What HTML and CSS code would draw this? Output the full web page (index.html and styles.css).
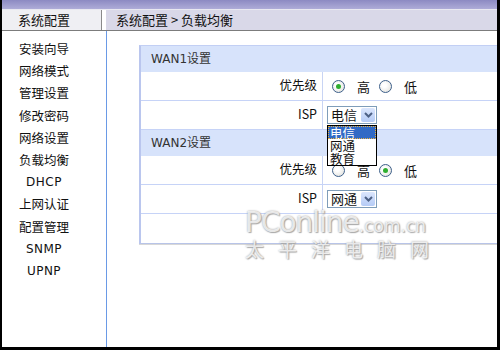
FILE: index.html
```html
<!DOCTYPE html>
<html lang="zh-CN">
    <head>
        <meta charset="UTF-8">
        <title>负载均衡</title>
        <link rel="stylesheet" href="styles.css">
    </head>
    <body>
        <div class="frame">
            <div class="topbar"></div>
            <div class="head">
                <div class="head-left">系统配置</div>
                <div class="head-right">系统配置 &gt; 负载均衡</div>
            </div>
            <div class="main">
                <ul class="menu">
                    <li>安装向导</li>
                    <li>网络模式</li>
                    <li>管理设置</li>
                    <li>修改密码</li>
                    <li>网络设置</li>
                    <li>负载均衡</li>
                    <li class="latin">DHCP</li>
                    <li>上网认证</li>
                    <li>配置管理</li>
                    <li class="latin">SNMP</li>
                    <li class="latin">UPNP</li>
                </ul>
                <div class="content">
                    <div class="panel">
                        <div class="sec-title">WAN1设置</div>
                        <div class="row">
                            <div class="label">优先级</div>
                            <div class="value">
                                <span class="radio on"></span><span class="opt">高</span>
                                <span class="radio"></span><span class="opt">低</span>
                            </div>
                        </div>
                        <div class="row">
                            <div class="label">ISP</div>
                            <div class="value">
                                <div class="select">
                                    <span class="select-text">电信</span>
                                    <span class="select-btn"><svg width="9" height="6" viewBox="0 0 9 6"><path d="M1 1 L4.5 4.5 L8 1" fill="none" stroke="#4d6185" stroke-width="2"/></svg></span>
                                    <ul class="dropdown">
                                        <li class="sel">电信</li>
                                        <li>网通</li>
                                        <li>教育</li>
                                    </ul>
                                </div>
                            </div>
                        </div>
                        <div class="sec-title">WAN2设置</div>
                        <div class="row">
                            <div class="label">优先级</div>
                            <div class="value">
                                <span class="radio"></span><span class="opt">高</span>
                                <span class="radio on"></span><span class="opt">低</span>
                            </div>
                        </div>
                        <div class="row">
                            <div class="label">ISP</div>
                            <div class="value">
                                <div class="select">
                                    <span class="select-text">网通</span>
                                    <span class="select-btn"><svg width="9" height="6" viewBox="0 0 9 6"><path d="M1 1 L4.5 4.5 L8 1" fill="none" stroke="#4d6185" stroke-width="2"/></svg></span>
                                </div>
                            </div>
                        </div>
                        <div class="row empty"></div>
                    </div>
                </div>
            </div>
            <div class="watermark">
                <div class="wm-top"><span class="wm-big">PConline</span>.com.cn</div>
                <div class="wm-cn">太平洋电脑网</div>
            </div>
        </div>
    </body>
</html>
```

FILE: styles.css
```css
body {
    margin: 0;
    font-family: "Noto Sans CJK SC", "DejaVu Sans", sans-serif;
    font-size: 12px;
    color: #111;
}

.frame {
    position: relative;
    width: 495px;
    height: 347px;
    border-left: 2px solid #000;
    border-right: 3px solid #000;
    border-bottom: 3px solid #000;
    background: #fff;
    display: flex;
    flex-direction: column;
    overflow: hidden;
}

.topbar {
    height: 9px;
    background: linear-gradient(#8c8ac2, #aeacd8);
    border-bottom: 1px solid #e8e8f0;
}

.head {
    display: flex;
    height: 20px;
    border-bottom: 1px solid #7c7c7c;
    font-size: 13px;
    line-height: 20px;
}

.head-left {
    width: 83px;
    padding-left: 16px;
    background: #efeff3;
    border-right: 1px solid #8a8a8a;
}

.head-right {
    flex: 1;
    margin-left: 4px;
    padding-left: 10px;
    background: #d9d8e8;
}

.main {
    flex: 1;
    display: flex;
}

.menu {
    width: 104px;
    margin: 0;
    padding: 7px 0 0 0;
    list-style: none;
    border-right: 1px solid #6a9ae6;
}

.menu li {
    width: 84px;
    height: 22.2px;
    line-height: 22px;
    text-align: center;
    font-size: 12.5px;
}

.menu li.latin {
    font-family: "DejaVu Sans", sans-serif;
    font-size: 12px;
    letter-spacing: 0.5px;
}

.content {
    flex: 1;
    padding: 14px 0 0 32px;
}

.panel {
    border-top: 1px solid #c2cff4;
    border-left: 2px solid #bac6ee;
    border-bottom: 1px solid #b8c4e8;
    box-shadow: 0 1px 0 #d8d8d8;
}

.sec-title {
    height: 26px;
    line-height: 26px;
    padding-left: 10px;
    background: #d7e3fb;
    font-family: "DejaVu Sans", "Noto Sans CJK SC", sans-serif;
    font-size: 12px;
    color: #333;
}

.row {
    display: flex;
    height: 28px;
    border-top: 1px solid #c6d3f7;
}

.sec-title + .row {
    border-top: none;
}

.row + .sec-title {
    border-top: 1px solid #c6d3f7;
}

.row.empty {
    height: 29px;
}

.label {
    width: 176px;
    padding-right: 5px;
    text-align: right;
    line-height: 26px;
    border-right: 1px solid #c8d4f4;
    font-size: 12.5px;
}

.value {
    flex: 1;
    display: flex;
    align-items: center;
    padding-left: 9px;
}

.radio {
    width: 11px;
    height: 11px;
    border: 1px solid #3d5f8a;
    border-radius: 50%;
    background: radial-gradient(circle at 40% 40%, #fff 20%, #dcdcd6 100%);
    display: flex;
    align-items: center;
    justify-content: center;
}

.radio.on::after {
    content: "";
    width: 5px;
    height: 5px;
    border-radius: 50%;
    background: #2fae2f;
}

.opt {
    margin: 0 9px 0 12px;
    font-size: 13px;
}

.select {
    position: relative;
    margin-left: -5px;
    width: 48px;
    height: 16px;
    border: 1px solid #7f9db9;
    display: flex;
    align-items: center;
    background: #fff;
}

.select-text {
    flex: 1;
    padding-left: 3px;
    font-size: 13px;
    line-height: 16px;
}

.select-btn {
    width: 14px;
    height: 14px;
    margin-right: 1px;
    border-radius: 2px;
    background: linear-gradient(#dbe6fd, #b5cbf6);
    display: flex;
    align-items: center;
    justify-content: center;
}

.dropdown {
    position: absolute;
    top: 18px;
    left: -1px;
    width: 48px;
    margin: 0;
    padding: 0;
    list-style: none;
    border: 1px solid #000;
    background: #fff;
    z-index: 2;
}

.dropdown li {
    height: 13px;
    line-height: 13px;
    padding-left: 2px;
    font-size: 12.5px;
}

.dropdown li.sel {
    background: #316ac5;
    color: #fff;
    outline: 1px dotted #e8b040;
    outline-offset: -1px;
}

.watermark {
    position: absolute;
    left: 243px;
    top: 206px;
    color: rgba(255, 255, 255, 0.75);
    text-shadow: 0 0 2px #9a9a9a, 1px 1px 1px #b0b0b0;
    font-family: "DejaVu Sans", sans-serif;
    pointer-events: none;
}

.wm-top {
    font-size: 17px;
    line-height: 33px;
}

.wm-big {
    font-size: 28px;
    letter-spacing: -1px;
}

.wm-cn {
    font-family: "Noto Sans CJK SC", sans-serif;
    font-size: 19px;
    line-height: 20px;
    letter-spacing: 14px;
    margin-top: -4px;
}
```
